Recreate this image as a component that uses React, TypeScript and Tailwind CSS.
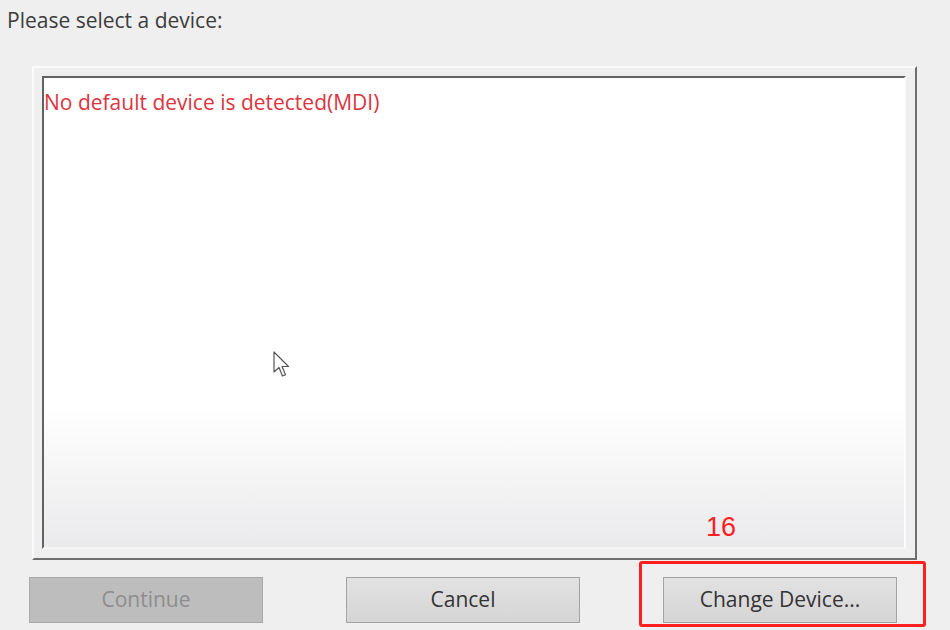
import React from 'react';

const font = { fontFamily: '"Open Sans", "Noto Sans", sans-serif' };

function Cursor() {
  return (
    <svg width="20" height="28" viewBox="0 0 20 28" className="absolute left-[272px] top-[351px]">
      <path
        d="M2 1 L2 21 L7 16.5 L10.5 25 L13.5 23.7 L10 15.5 L16.5 15.5 Z"
        fill="#ffffff"
        stroke="#555555"
        strokeWidth="1.2"
        strokeLinejoin="round"
      />
    </svg>
  );
}

function DialogButton({ label, disabled }: { label: string; disabled?: boolean }) {
  return (
    <button
      className={
        disabled
          ? 'w-[234px] h-[46px] border border-[#a9a9a9] bg-[#bdbdbd] text-[21px] text-[#8d8d8d]'
          : 'w-[234px] h-[46px] border border-[#a3a3a3] bg-gradient-to-b from-[#e2e2e2] to-[#d5d5d5] text-[21px] text-[#333333]'
      }
    >
      {label}
    </button>
  );
}

export default function App() {
  return (
    <div className="relative w-[950px] h-[630px] overflow-hidden bg-[#efeff0]" style={font}>
      {/* Label */}
      <div className="pl-[7px] pt-[5px] h-[66px] text-[21px] leading-[30px] text-[#3c3c3c]">
        Please select a device:
      </div>

      {/* Group frame */}
      <div className="ml-[32px] w-[885px] h-[494px] border-2 border-t-[#fafafa] border-l-[#fafafa] border-r-[#6e6e6e] border-b-[#6e6e6e] bg-[#efeff0] pt-[8px] pl-[8px] pr-[9px] pb-[9px]">
        <div className="h-full border-2 border-t-[#626262] border-l-[#626262] border-r-[#fbfbfb] border-b-[#f6f6f6] bg-gradient-to-b from-white from-70% to-[#eaeaec] pt-[9px]">
          <div className="text-[21px] leading-[30px] text-[#dc3540]">
            No default device is detected(MDI)
          </div>
        </div>
      </div>

      {/* Buttons */}
      <div className="flex gap-[83px] mt-[17px] pl-[29px]">
        <DialogButton label="Continue" disabled />
        <DialogButton label="Cancel" />
        <DialogButton label="Change Device..." />
      </div>

      {/* Annotation overlay */}
      <div className="absolute left-[639px] top-[561px] w-[287px] h-[66px] border-[3px] border-[#ff1f1f] rounded-[3px]" />
      <div
        className="absolute left-[706px] top-[509px] text-[27px] leading-[36px] text-[#ff1f1f]"
        style={{ fontFamily: '"Liberation Sans", Arial, sans-serif' }}
      >
        16
      </div>
      <Cursor />
    </div>
  );
}
